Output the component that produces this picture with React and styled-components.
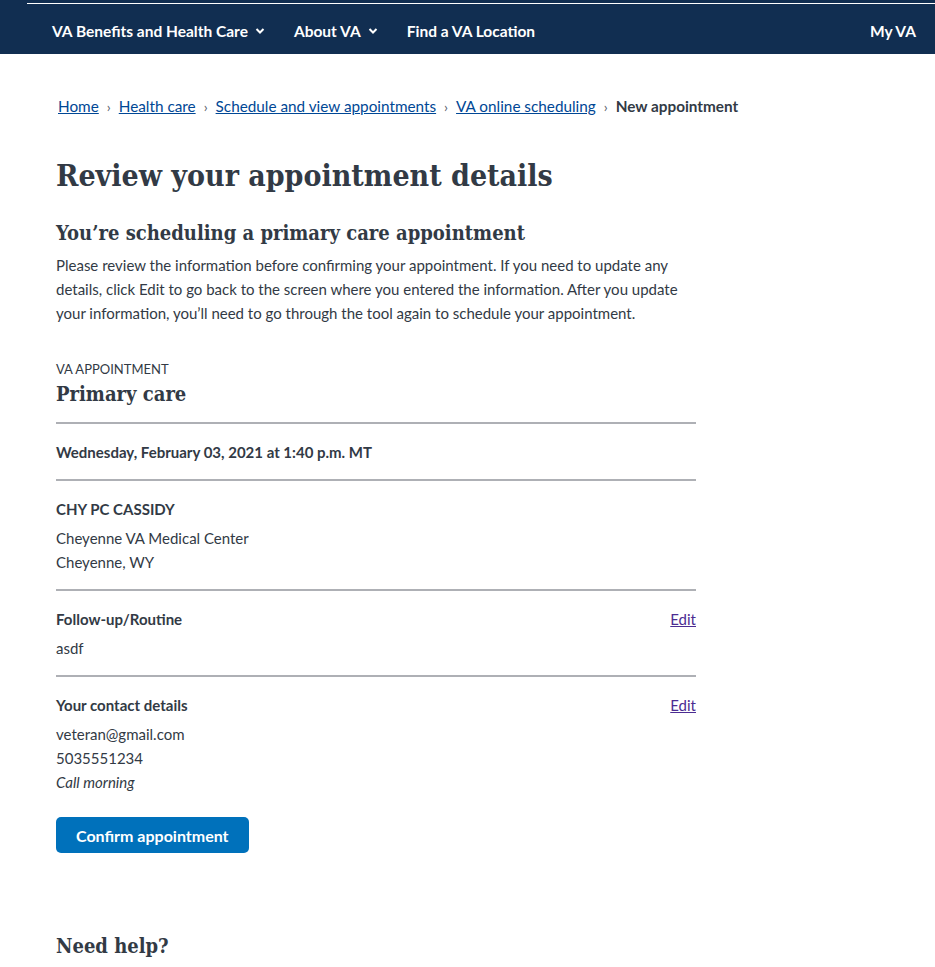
import React from 'react';
import styled, { createGlobalStyle } from 'styled-components';

const GlobalStyle = createGlobalStyle`
  body {
    margin: 0;
    background: #fff;
    color: #323a45;
    font-family: Lato, "Noto Sans", sans-serif;
  }
`;

const sans = 'Lato, "Noto Sans", sans-serif';
const serif = '"DejaVu Serif Condensed", "DejaVu Serif", "Liberation Serif", serif';

const NavBar = styled.header`
  background: #112e51;
  height: 54px;
  position: relative;
  padding: 0 19px 0 52px;
  display: flex;
  align-items: center;
  color: #fff;
  font-family: ${sans};
  font-weight: 700;
  font-size: 15.5px;

  &::before {
    content: '';
    position: absolute;
    top: 3px;
    left: 27px;
    right: 0;
    height: 1px;
    background: #fff;
  }
`;

const NavItem = styled.span`
  display: flex;
  align-items: center;
  gap: 7px;
  margin-right: ${p => (p.push ? 'auto' : p.end ? '0' : '29px')};
  padding-top: 8px;
`;

const Chevron = () => (
  <svg width="10" height="8" viewBox="0 0 10 8" aria-hidden="true">
    <path d="M1.5 2 L5 5.5 L8.5 2" fill="none" stroke="#fff" strokeWidth="2" />
  </svg>
);

const Main = styled.main`
  padding: 41px 0 0 56px;
  font-family: ${sans};
`;

const Column = styled.div`
  width: 640px;
`;

const Crumbs = styled.nav`
  display: flex;
  align-items: center;
  white-space: nowrap;
  font-size: 15.3px;
  margin-left: 2px;
  height: 22px;
`;

const Crumb = styled.a`
  color: #004795;
  text-decoration: underline;
`;

const Sep = styled.span`
  color: #5b616b;
  margin: 0 8px;
  font-size: 14px;
`;

const Current = styled.span`
  font-weight: 700;
  color: #323a45;
`;

const Title = styled.h1`
  font-family: ${serif};
  font-stretch: condensed;
  font-size: 30px;
  font-weight: 700;
  margin: 37px 0 0;
  line-height: 44px;
  color: #323a45;
`;

const SubTitle = styled.h2`
  font-family: ${serif};
  font-stretch: condensed;
  font-size: 20px;
  font-weight: 700;
  margin: ${p => (p.help ? '78px 0 0' : '20px 0 0')};
  line-height: 30px;
`;

const Intro = styled.p`
  font-size: 15px;
  line-height: 24px;
  margin: 5px 0 0;
`;

const Eyebrow = styled.div`
  margin-top: 35px;
  font-size: 13px;
  text-transform: uppercase;
  line-height: 18px;
`;

const CardTitle = styled.h3`
  font-family: ${serif};
  font-stretch: condensed;
  font-size: 20px;
  font-weight: 700;
  margin: 2px 0 0;
  line-height: 28px;
`;

const Section = styled.section`
  border-top: 2px solid #aeb0b5;
  padding: ${p => (p.last ? '16px 0 0' : '16px 0 15px')};
  margin-top: ${p => (p.first ? '14px' : '0')};
  display: flex;
  justify-content: space-between;
  align-items: flex-start;
`;

const Block = styled.div`
  display: flex;
  flex-direction: column;
`;

const Label = styled.div`
  font-weight: 700;
  font-size: 15px;
  line-height: 24px;
  margin-bottom: ${p => (p.solo ? '0' : '5px')};
`;

const Line = styled.div`
  font-size: 15px;
  line-height: 24px;
  font-style: ${p => (p.italic ? 'italic' : 'normal')};
`;

const EditLink = styled.a`
  color: #4c2c92;
  font-size: 15px;
  line-height: 24px;
  text-decoration: underline;
`;

const ConfirmButton = styled.button`
  display: block;
  margin-top: 23px;
  background: #0071bb;
  color: #fff;
  border: 0;
  border-radius: 5px;
  height: 36px;
  padding: 0 20px;
  font-family: ${sans};
  font-weight: 700;
  font-size: 16px;
  cursor: pointer;
`;

export default function App() {
  return (
    <>
      <GlobalStyle />
      <NavBar>
        <NavItem>VA Benefits and Health Care <Chevron /></NavItem>
        <NavItem>About VA <Chevron /></NavItem>
        <NavItem push>Find a VA Location</NavItem>
        <NavItem end>My VA</NavItem>
      </NavBar>
      <Main>
        <Crumbs>
          <Crumb href="#">Home</Crumb>
          <Sep>›</Sep>
          <Crumb href="#">Health care</Crumb>
          <Sep>›</Sep>
          <Crumb href="#">Schedule and view appointments</Crumb>
          <Sep>›</Sep>
          <Crumb href="#">VA online scheduling</Crumb>
          <Sep>›</Sep>
          <Current>New appointment</Current>
        </Crumbs>
        <Column>
          <Title>Review your appointment details</Title>
          <SubTitle>You’re scheduling a primary care appointment</SubTitle>
          <Intro>
            Please review the information before confirming your appointment. If you need to update any
            details, click Edit to go back to the screen where you entered the information. After you update
            your information, you’ll need to go through the tool again to schedule your appointment.
          </Intro>
          <Eyebrow>VA appointment</Eyebrow>
          <CardTitle>Primary care</CardTitle>
          <Section first>
            <Label solo>Wednesday, February 03, 2021 at 1:40 p.m. MT</Label>
          </Section>
          <Section>
            <Block>
              <Label>CHY PC CASSIDY</Label>
              <Line>Cheyenne VA Medical Center</Line>
              <Line>Cheyenne, WY</Line>
            </Block>
          </Section>
          <Section>
            <Block>
              <Label>Follow-up/Routine</Label>
              <Line>asdf</Line>
            </Block>
            <EditLink href="#">Edit</EditLink>
          </Section>
          <Section last>
            <Block>
              <Label>Your contact details</Label>
              <Line>veteran@gmail.com</Line>
              <Line>5035551234</Line>
              <Line italic>Call morning</Line>
            </Block>
            <EditLink href="#">Edit</EditLink>
          </Section>
          <ConfirmButton>Confirm appointment</ConfirmButton>
          <SubTitle help>Need help?</SubTitle>
        </Column>
      </Main>
    </>
  );
}
